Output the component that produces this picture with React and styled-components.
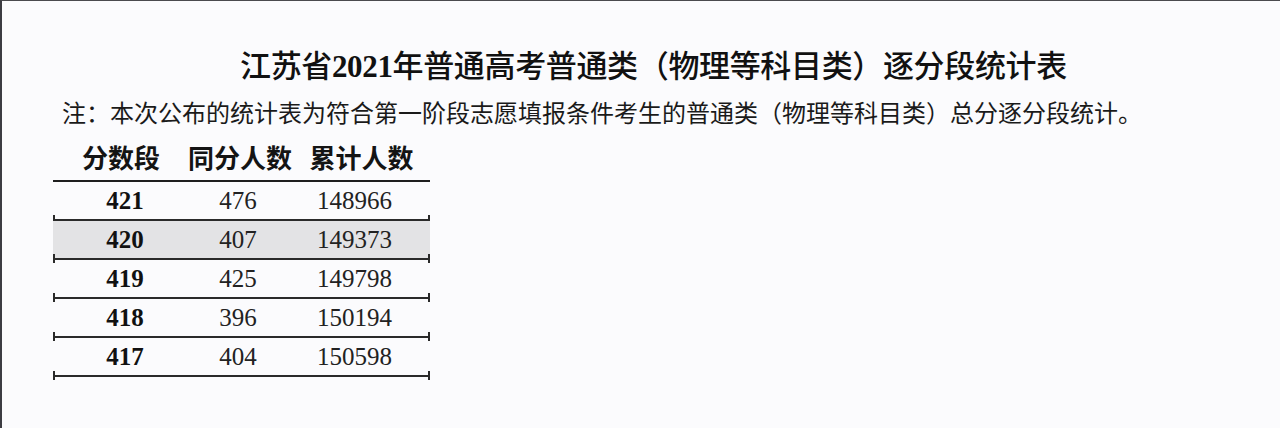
import React from 'react';
import styled, { createGlobalStyle } from 'styled-components';

const rows = [
  { score: '421', same: '476', total: '148966' },
  { score: '420', same: '407', total: '149373', shaded: true },
  { score: '419', same: '425', total: '149798' },
  { score: '418', same: '396', total: '150194' },
  { score: '417', same: '404', total: '150598' },
];

const GlobalStyle = createGlobalStyle`
  html, body {
    margin: 0;
    padding: 0;
    background: #fbfbfd;
  }
`;

const Page = styled.div`
  box-sizing: border-box;
  width: 1280px;
  height: 428px;
  border-top: 1px solid #4a4a4e;
  border-left: 2px solid #3c3c42;
  background: #fbfbfd;
  padding-top: 46px;
  color: #141414;
  overflow: hidden;
`;

const Title = styled.h1`
  margin: 0;
  padding-left: 238px;
  font-family: "Liberation Serif", "Noto Sans CJK SC", serif;
  font-size: 31px;
  font-weight: 500;
  letter-spacing: -0.35px;
  line-height: 40px;
  color: #111;
  white-space: nowrap;
`;

const Year = styled.span`
  font-weight: 700;
`;

const Note = styled.p`
  margin: 10px 0 0 0;
  padding-left: 60px;
  font-family: "Noto Sans CJK SC", "Noto Sans", sans-serif;
  font-size: 24px;
  line-height: 30px;
  color: #1a1a1a;
  white-space: nowrap;
`;

const Table = styled.div`
  margin: 10px 0 0 51px;
  width: 377px;
`;

const Grid = styled.div`
  display: grid;
  grid-template-columns: 144px 82px 151px;
  align-items: center;
`;

const HeadRow = styled(Grid)`
  box-sizing: border-box;
  height: 45px;
  padding-bottom: 4px;
  border-bottom: 2px solid #1e1e1e;
  font-family: "Noto Sans CJK SC", sans-serif;
  font-size: 26px;
  font-weight: 700;
  line-height: 32px;
`;

const HeadCell = styled.div`
  display: flex;
  justify-content: center;
  white-space: nowrap;
  transform: translateX(${p => p.shift || 0}px);
`;

const Row = styled(Grid)`
  position: relative;
  height: 39px;
  box-sizing: border-box;
  border-bottom: 2px solid #2a2a2a;
  background: ${p => (p.shaded ? '#e3e3e5' : 'transparent')};
  font-family: "Liberation Serif", serif;
  font-size: 25px;
  line-height: 37px;

  &::before,
  &::after {
    content: '';
    position: absolute;
    bottom: -5px;
    width: 2px;
    height: 9px;
    background: #2a2a2a;
  }
  &::before { left: 0; }
  &::after { right: 0; }
`;

const Cell = styled.div`
  text-align: center;
  font-weight: ${p => (p.bold ? 700 : 400)};
  color: ${p => (p.bold ? '#111' : '#222')};
`;

export default function App() {
  return (
    <Page>
      <GlobalStyle />
      <Title>江苏省<Year>2021</Year>年普通高考普通类（物理等科目类）逐分段统计表</Title>
      <Note>注：本次公布的统计表为符合第一阶段志愿填报条件考生的普通类（物理等科目类）总分逐分段统计。</Note>
      <Table>
        <HeadRow>
          <HeadCell shift={-4}>分数段</HeadCell>
          <HeadCell shift={2}>同分人数</HeadCell>
          <HeadCell shift={7}>累计人数</HeadCell>
        </HeadRow>
        {rows.map(r => (
          <Row key={r.score} shaded={r.shaded}>
            <Cell bold>{r.score}</Cell>
            <Cell>{r.same}</Cell>
            <Cell>{r.total}</Cell>
          </Row>
        ))}
      </Table>
    </Page>
  );
}
